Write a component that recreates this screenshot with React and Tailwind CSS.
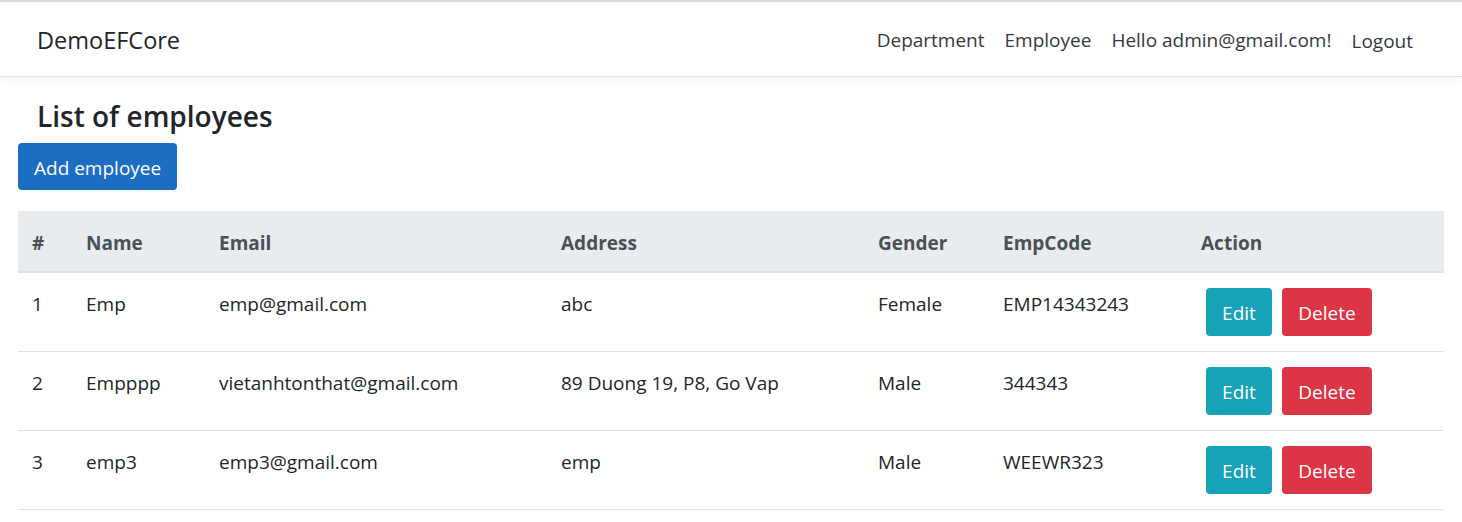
const employees = [
  { id: 1, name: 'Emp', email: 'emp@gmail.com', address: 'abc', gender: 'Female', code: 'EMP14343243' },
  { id: 2, name: 'Empppp', email: 'vietanhtonthat@gmail.com', address: '89 Duong 19, P8, Go Vap', gender: 'Male', code: '344343' },
  { id: 3, name: 'emp3', email: 'emp3@gmail.com', address: 'emp', gender: 'Male', code: 'WEEWR323' },
]

const font = "font-['Segoe_UI','Open_Sans',sans-serif]"

export default function App() {
  return (
    <div className={`min-h-screen bg-white text-[19px] leading-[30px] text-[#212529] ${font}`}>
      <div className="h-[3px] border-t-2 border-[#dcdce0] bg-white" />
      {/* Навбар */}
      <header className="relative z-10 border-b border-[#dee2e6] bg-white shadow-[0_4px_12px_rgba(0,0,0,0.05)]">
        <div className="flex h-[73px] items-center justify-between pl-[37px] pr-[39px]">
          <span className="text-[23.5px] text-[#212529]">DemoEFCore</span>
          <nav className="flex items-center text-[19px] text-[#343a40]">
            <a className="px-[10px]">Department</a>
            <a className="px-[10px]">Employee</a>
            <span className="px-[10px]">Hello admin@gmail.com!</span>
            <button type="button" className="mt-[2px] px-[10px]">Logout</button>
          </nav>
        </div>
      </header>

      <main className="px-[18px] pt-[21px]">
        <h4 className="pl-[19px] text-[28px] font-semibold leading-[36px]">List of employees</h4>
        <button
          type="button"
          className="mt-[9px] h-[47px] rounded-[4px] bg-[#1b6ec2] px-[16px] pt-[2px] text-white"
        >
          Add employee
        </button>

        <table className="mt-[21px] w-full table-fixed border-collapse text-left">
          <thead className="bg-[#e9ecef] text-[#495057]">
            <tr className="border-b-2 border-[#dee2e6]">
              <th className="w-[54px] px-[14px] pb-[13px] pt-[17px] font-bold">#</th>
              <th className="w-[133px] px-[14px] pb-[13px] pt-[17px] font-bold">Name</th>
              <th className="w-[342px] px-[14px] pb-[13px] pt-[17px] font-bold">Email</th>
              <th className="w-[317px] px-[14px] pb-[13px] pt-[17px] font-bold">Address</th>
              <th className="w-[125px] px-[14px] pb-[13px] pt-[17px] font-bold">Gender</th>
              <th className="w-[198px] px-[14px] pb-[13px] pt-[17px] font-bold">EmpCode</th>
              <th className="px-[14px] pb-[13px] pt-[17px] font-bold">Action</th>
            </tr>
          </thead>
          <tbody>
            {employees.map((e) => (
              <tr key={e.id} className="border-b border-[#dee2e6] align-top">
                <td className="px-[14px] pt-[16px]">{e.id}</td>
                <td className="px-[14px] pt-[16px]">{e.name}</td>
                <td className="px-[14px] pt-[16px]">{e.email}</td>
                <td className="px-[14px] pt-[16px]">{e.address}</td>
                <td className="px-[14px] pt-[16px]">{e.gender}</td>
                <td className="px-[14px] pt-[16px]">{e.code}</td>
                <td className="px-[14px] py-[15px]">
                  <div className="flex gap-[10px] pl-[5px]">
                    <button type="button" className="h-[48px] w-[66px] rounded-[4px] bg-[#17a2b8] pt-[2px] text-white">
                      Edit
                    </button>
                    <button type="button" className="h-[48px] w-[90px] rounded-[4px] bg-[#dc3545] pt-[2px] text-white">
                      Delete
                    </button>
                  </div>
                </td>
              </tr>
            ))}
          </tbody>
        </table>
      </main>
    </div>
  )
}
